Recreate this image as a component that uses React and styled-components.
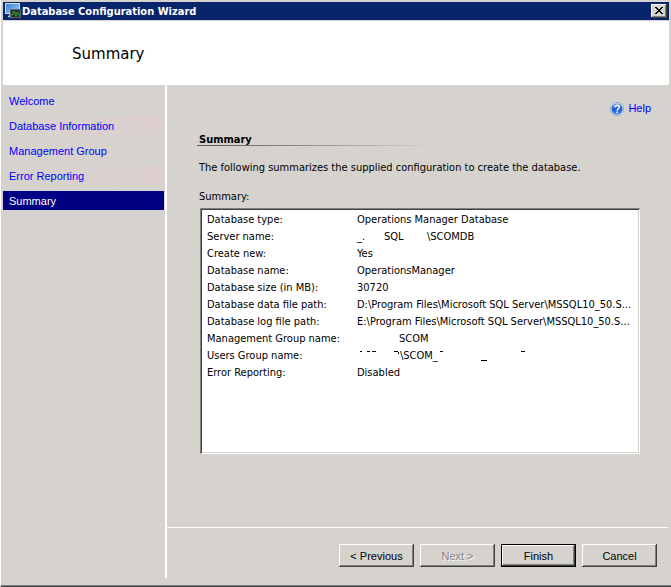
import React from "react";
import styled, { createGlobalStyle, css } from "styled-components";

const steps = [
  { label: "Welcome" },
  { label: "Database Information", tinted: true },
  { label: "Management Group" },
  { label: "Error Reporting", tinted: true },
  { label: "Summary", active: true },
];

const App = () => {
  return (
    <>
      <GlobalStyle />
      <Window>
        <TitleBar>
          <AppIcon />
          <TitleText>Database Configuration Wizard</TitleText>
          <CloseBtn type="button" aria-label="Close">
            <svg width="8" height="7" viewBox="0 0 8 7" shapeRendering="crispEdges">
              <path
                d="M0 0h2v1h1v1h2v-1h1v-1h2v1h-1v1h-1v1h-1v1h1v1h1v1h1v1h-2v-1h-1v-1h-2v1h-1v1h-2v-1h1v-1h1v-1h1v-1h-1v-1h-1v-1h-1z"
                fill="#000"
              />
            </svg>
          </CloseBtn>
        </TitleBar>
        <Header>
          <PageTitle>Summary</PageTitle>
        </Header>
        <Body>
          <SideBar>
            {steps.map((step) => (
              <StepLink
                key={step.label}
                href="#"
                $tinted={step.tinted}
                $active={step.active}
                aria-current={step.active ? "step" : undefined}
              >
                {step.label}
              </StepLink>
            ))}
          </SideBar>
          <Main>
            <Content>
              <HelpLink href="#">
                <HelpIcon />
                Help
              </HelpLink>
              <SectionTitle>Summary</SectionTitle>
              <Description>
                The following summarizes the supplied configuration to create the database.
              </Description>
              <ListLabel id="summary-label">Summary:</ListLabel>
              <ListBox>
                <SummaryTable aria-labelledby="summary-label">
                  <tbody>
                    <Row name="Database type:">Operations Manager Database</Row>
                    <Row name="Server name:">
                      <Part $width={27}>_.</Part>
                      <Part $width={43}>SQL</Part>
                      \SCOMDB
                    </Row>
                    <Row name="Create new:">Yes</Row>
                    <Row name="Database name:">OperationsManager</Row>
                    <Row name="Database size (in MB):">30720</Row>
                    <Row name="Database data file path:">
                      D:\Program Files\Microsoft SQL Server\MSSQL10_50.S...
                    </Row>
                    <Row name="Database log file path:">
                      E:\Program Files\Microsoft SQL Server\MSSQL10_50.S...
                    </Row>
                    <Row name="Management Group name:">
                      <Part $width={42} />
                      SCOM
                    </Row>
                    <Row name="Users Group name:">
                      <Part $width={43}>
                        <Marks width="43" d="M3 4h2v1h-2zM10 4h3v1h-3zM15 4h4v1h-4zM37 4h4v1h1v2h-1v-2h-4z" />
                      </Part>
                      \SCOM_
                      <Marks width="90" d="M2 4h3v1h-3zM43 13h6v1h-6zM83 4h4v1h-4z" />
                    </Row>
                    <Row name="Error Reporting:">Disabled</Row>
                  </tbody>
                </SummaryTable>
              </ListBox>
            </Content>
            <Footer>
              <WizardBtn type="button">&lt; Previous</WizardBtn>
              <WizardBtn type="button" disabled>
                Next &gt;
              </WizardBtn>
              <WizardBtn type="button" $primary>
                Finish
              </WizardBtn>
              <WizardBtn type="button">Cancel</WizardBtn>
            </Footer>
          </Main>
        </Body>
      </Window>
    </>
  );
};

export default App;

const Row = ({ name, children }) => (
  <tr>
    <NameCell scope="row">{name}</NameCell>
    <ValueCell>{children}</ValueCell>
  </tr>
);

// leftovers of the masked names
const Marks = ({ width, d }) => (
  <MarksSvg width={width} height="17" viewBox={`0 0 ${width} 17`} shapeRendering="crispEdges">
    <path d={d} fill="#000" />
  </MarksSvg>
);

const AppIcon = () => (
  <svg width="16" height="16" viewBox="0 0 16 16">
    <defs>
      <linearGradient id="screen" x1="0" y1="0" x2="1" y2="1">
        <stop offset="0" stopColor="#3f7fd6" />
        <stop offset="1" stopColor="#a3cdf7" />
      </linearGradient>
    </defs>
    <rect x="0.5" y="0.5" width="14" height="10" fill="url(#screen)" stroke="#d5dbe4" />
    <path d="M3 13.5h3M5 11v2" stroke="#c3ccd8" strokeWidth="1.5" fill="none" />
    <rect x="5.5" y="6.5" width="10" height="8" fill="#26352c" stroke="#5b6a66" />
    <path d="M6 12h1.5l1.500-4 2 5 1.500-4 1.500 3h1" fill="none" stroke="#3a9e3c" />
  </svg>
);

const HelpIcon = () => (
  <svg width="14" height="14" viewBox="0 0 14 14">
    <defs>
      <linearGradient id="ball" x1="0" y1="0" x2="0" y2="1">
        <stop offset="0" stopColor="#6b9bea" />
        <stop offset="0.5" stopColor="#2058cf" />
        <stop offset="1" stopColor="#3d8df0" />
      </linearGradient>
    </defs>
    <circle cx="7" cy="7" r="6.5" fill="#e4ebf5" stroke="#8ea5cb" />
    <circle cx="7" cy="7" r="5.5" fill="url(#ball)" />
    <path d="M4.9 5.3c0-2.7 4.300-2.600 4.300 0C9.200 6.900 7.200 6.700 7.200 8.700" fill="none" stroke="#fff" strokeWidth="1.500" />
    <rect x="6.400" y="9.600" width="1.600" height="1.500" fill="#fff" />
  </svg>
);

const GlobalStyle = createGlobalStyle`
  * {
    box-sizing: border-box;
  }
  body {
    margin: 0;
    background: #d6d3ce;
    color: #000;
    font-family: "DejaVu Sans Condensed", "DejaVu Sans", sans-serif;
    font-size: 11px;
    line-height: 17px;
  }
`;

const Window = styled.div`
  display: flex;
  flex-direction: column;
  min-height: 100vh;
  padding: 2px 2px 8px;
  border-left: 1px solid #fff;
  border-bottom: 1px solid #404040;
  box-shadow: inset 0 -1px 0 #808080;
`;

const TitleBar = styled.div`
  display: flex;
  align-items: center;
  gap: 1px;
  height: 18px;
  margin-bottom: 1px;
  padding: 0 2px;
  background: #08246b;
`;

const TitleText = styled.div`
  flex: 1;
  color: #fff;
  font-weight: bold;
`;

const CloseBtn = styled.button`
  display: flex;
  align-items: center;
  justify-content: center;
  width: 16px;
  height: 14px;
  padding: 0 1px 1px 0;
  border: 0;
  background: #d6d3ce;
  box-shadow: inset -1px -1px 0 #404040, inset 1px 1px 0 #fff, inset -2px -2px 0 #808080;
`;

const Header = styled.header`
  display: flex;
  align-items: center;
  height: 64px;
  padding: 2px 0 0 69px;
  background: #fff;
`;

const PageTitle = styled.h1`
  margin: 0;
  font-family: "DejaVu Sans", sans-serif;
  font-size: 15px;
  font-weight: normal;
`;

const Body = styled.div`
  flex: 1;
  display: flex;
`;

const SideBar = styled.nav`
  display: flex;
  flex-direction: column;
  gap: 6px;
  width: 164px;
  padding: 6px 1px 0 0;
  border-right: 2px solid #fff;
`;

const StepLink = styled.a`
  height: 19px;
  padding-left: 6px;
  color: #0000ff;
  font-family: "Liberation Sans", Arial, sans-serif;
  line-height: 20px;
  text-decoration: none;
  background: linear-gradient(to right, #d6d3ce, #d8d1cd);
  ${({ $tinted }) =>
    $tinted &&
    css`
      background: linear-gradient(to right, #d6d3ce, #dccfcd);
    `}
  ${({ $active }) =>
    $active &&
    css`
      background: #000084;
      color: #fff;
    `}
`;

const Main = styled.main`
  flex: 1;
  display: flex;
  flex-direction: column;
  min-width: 0;
`;

const Content = styled.div`
  flex: 1;
  display: flex;
  flex-direction: column;
  padding: 15px 29px 0 32px;
`;

const HelpLink = styled.a`
  display: flex;
  align-items: center;
  align-self: flex-end;
  gap: 4px;
  margin-right: -11px;
  color: #0000ff;
  font-family: "Liberation Sans", Arial, sans-serif;
  text-decoration: none;
`;

const SectionTitle = styled.h2`
  width: 240px;
  margin: 14px 0 0 -2px;
  padding-left: 2px;
  font-size: 11px;
  font-weight: bold;
  background: linear-gradient(to right, #555, #d6d3ce) 0 14px / 100% 1px no-repeat;
`;

const Description = styled.p`
  margin: 11px 0 12px;
`;

const ListLabel = styled.div`
  margin-bottom: 3px;
`;

const ListBox = styled.div`
  height: 246px;
  margin-left: 1px;
  padding: 3px 5px;
  background: #fff;
  box-shadow: inset 1px 1px 0 #808080, inset -1px -1px 0 #fff, inset 2px 2px 0 #404040,
    inset -2px -2px 0 #d6d3ce;
`;

const SummaryTable = styled.table`
  width: 100%;
  border-collapse: collapse;
  table-layout: fixed;
`;

const NameCell = styled.th`
  width: 152px;
  height: 17px;
  padding: 0 0 0 2px;
  font-weight: normal;
  text-align: left;
`;

const ValueCell = styled.td`
  height: 17px;
  padding: 0;
  white-space: nowrap;
`;

const Part = styled.span`
  display: inline-block;
  width: ${({ $width }) => $width}px;
`;

const MarksSvg = styled.svg`
  display: inline-block;
  height: 17px;
  vertical-align: top;
`;

const Footer = styled.footer`
  display: flex;
  justify-content: flex-end;
  gap: 6px;
  margin-right: 1px;
  padding: 16px 11px 11px;
  border-top: 1px solid #fff;
`;

const WizardBtn = styled.button`
  width: 75px;
  height: 23px;
  padding: 0;
  border: 0;
  background: #d6d3ce;
  color: #000;
  font-family: "Liberation Sans", Arial, sans-serif;
  font-size: 11px;
  box-shadow: inset -1px -1px 0 #404040, inset 1px 1px 0 #fff, inset -2px -2px 0 #808080;
  &:disabled {
    color: #848284;
    text-shadow: 1px 1px 0 #fff;
  }
  ${({ $primary }) =>
    $primary &&
    css`
      border: 1px solid #000;
    `}
`;
